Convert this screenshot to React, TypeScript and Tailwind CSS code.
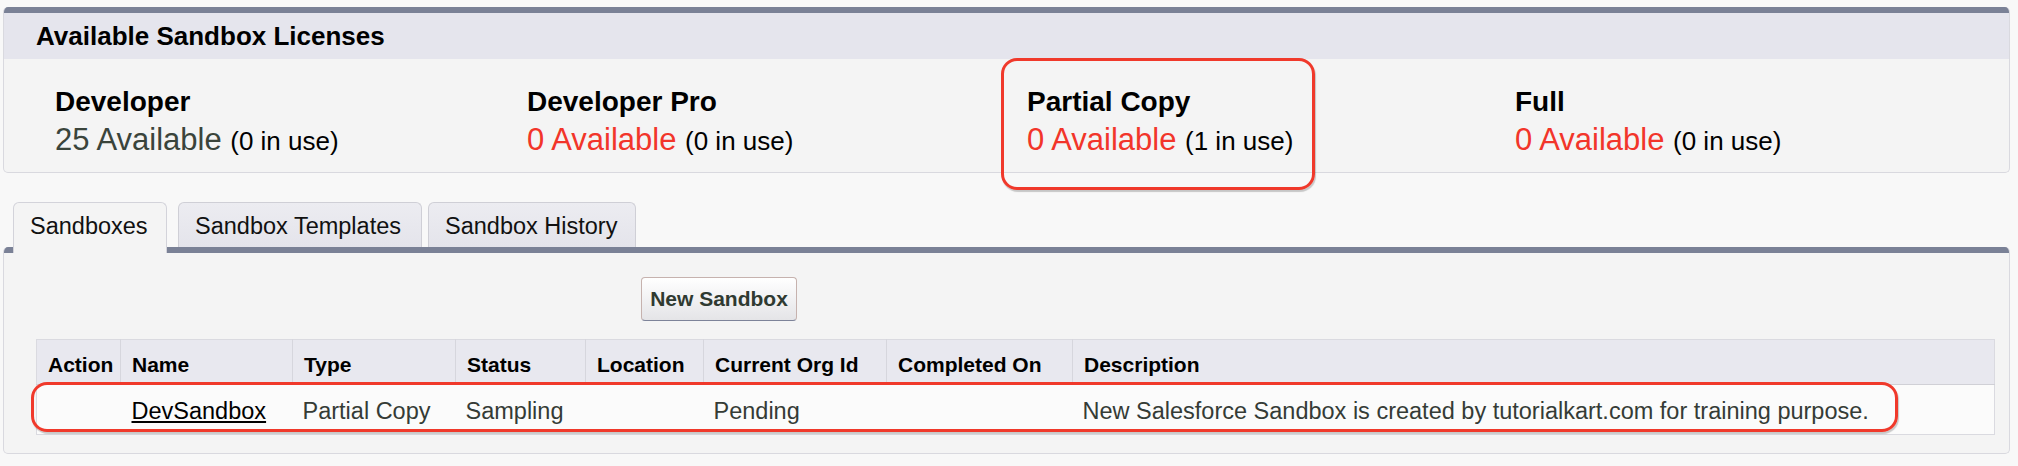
import React from "react";

const licenses = [
  { name: "Developer", avail: "25 Available", use: "(0 in use)", ok: true },
  { name: "Developer Pro", avail: "0 Available", use: "(0 in use)", ok: false },
  { name: "Partial Copy", avail: "0 Available", use: "(1 in use)", ok: false },
  { name: "Full", avail: "0 Available", use: "(0 in use)", ok: false },
];

const cols = [
  { label: "Action", w: 84 },
  { label: "Name", w: 172 },
  { label: "Type", w: 163 },
  { label: "Status", w: 130 },
  { label: "Location", w: 118 },
  { label: "Current Org Id", w: 183 },
  { label: "Completed On", w: 186 },
  { label: "Description", w: 922 },
];

export default function App() {
  return (
    <div className="relative w-[2018px] h-[466px] overflow-hidden bg-[#f8f8f8] pt-[7px] font-['Liberation_Sans',Arial,sans-serif] text-black">
      {/* Available Sandbox Licenses panel */}
      <div className="ml-[3px] w-[2007px] overflow-hidden rounded-[5px] border border-t-0 border-[#d9d9df] bg-[#f4f4f4]">
        <div className="h-[6px] bg-[#7a8196]" />
        <div className="h-[46px] bg-[#e5e5ed] pl-[32px] text-[26px] font-bold leading-[46px]">
          Available Sandbox Licenses
        </div>
        <div className="grid grid-cols-[472px_500px_488px_1fr] pl-[51px] pt-[27px] pb-[14px]">
          {licenses.map((l) => (
            <div key={l.name}>
              <div className="text-[28px] font-bold leading-[32px]">{l.name}</div>
              <div className="mt-[4px] text-[31px] leading-[36px] whitespace-nowrap">
                <span className={l.ok ? "text-[#3a443b]" : "text-[#f2352a]"}>{l.avail}</span>{" "}
                <span className="text-[26px] leading-[20px] text-black">{l.use}</span>
              </div>
            </div>
          ))}
        </div>
      </div>

      {/* Tabs */}
      <div className="mt-[29px] flex h-[45px] items-start">
        <div className="relative z-10 ml-[13px] -mb-[6px] h-[51px] w-[154px] rounded-t-[6px] border border-b-0 border-[#d3d3da] bg-[#f4f4f4] pl-[16px] pt-[9px] text-[23.5px] leading-[28px] text-[#111]">
          Sandboxes
        </div>
        <div className="ml-[11px] h-[45px] w-[244px] rounded-t-[6px] border border-b-0 border-[#cfcfd6] bg-[linear-gradient(#ececf1,#e4e4eb)] pl-[16px] pt-[9px] text-[23.5px] leading-[28px] text-[#111]">
          Sandbox Templates
        </div>
        <div className="ml-[6px] h-[45px] w-[208px] rounded-t-[6px] border border-b-0 border-[#cfcfd6] bg-[linear-gradient(#ececf1,#e4e4eb)] pl-[16px] pt-[9px] text-[23.5px] leading-[28px] text-[#111]">
          Sandbox History
        </div>
      </div>

      {/* Sandboxes content panel */}
      <div className="ml-[3px] w-[2007px] overflow-hidden rounded-[5px] border border-t-0 border-[#d9d9df] bg-[#f4f4f4]">
        <div className="h-[6px] bg-[#7a8196]" />
        <div className="pl-[32px] pr-[15px] pt-[24px] pb-[18px]">
          <div className="flex">
            <button className="ml-[605px] h-[44px] w-[156px] rounded-[4px] border border-[#c6b2ae] border-b-[#7d8399] bg-[linear-gradient(#ffffff,#e4e4e7)] text-[21px] font-bold leading-[24px] text-[#2f3a31]">
              New Sandbox
            </button>
          </div>
          <table className="mt-[18px] w-[1958px] table-fixed border-collapse border border-[#dadae0]">
            <colgroup>
              {cols.map((c) => (
                <col key={c.label} style={{ width: c.w }} />
              ))}
            </colgroup>
            <thead>
              <tr className="bg-[#e8e8ef]">
                {cols.map((c, i) => (
                  <th
                    key={c.label}
                    className={
                      "px-[11px] pt-[13px] pb-[7px] text-left text-[21px] font-bold leading-[24px] whitespace-nowrap text-black " +
                      (i > 0 ? "border-l border-[#d6d6dd]" : "")
                    }
                  >
                    {c.label}
                  </th>
                ))}
              </tr>
            </thead>
            <tbody>
              <tr className="border-t border-[#d0d0d6] bg-[#fbfbfb] text-[23.5px] leading-[26px] text-[#353b36]">
                <td className="px-[11px] pt-[13px] pb-[10px]"></td>
                <td className="px-[11px] pt-[13px] pb-[10px]">
                  <a className="text-black underline">DevSandbox</a>
                </td>
                <td className="px-[10px] pt-[13px] pb-[10px] whitespace-nowrap">Partial Copy</td>
                <td className="px-[10px] pt-[13px] pb-[10px]">Sampling</td>
                <td className="px-[10px] pt-[13px] pb-[10px]"></td>
                <td className="px-[10px] pt-[13px] pb-[10px]">Pending</td>
                <td className="px-[10px] pt-[13px] pb-[10px]"></td>
                <td className="px-[10px] pt-[13px] pb-[10px] whitespace-nowrap">
                  New Salesforce Sandbox is created by tutorialkart.com for training purpose.
                </td>
              </tr>
            </tbody>
          </table>
        </div>
      </div>

      {/* Red annotation outlines */}
      <div className="pointer-events-none absolute left-[1001px] top-[58px] h-[132px] w-[314px] rounded-[16px] border-[3px] border-[#f0392b] shadow-[1px_2px_1px_rgba(0,0,0,0.2)]" />
      <div className="pointer-events-none absolute left-[31px] top-[382px] h-[50px] w-[1867px] rounded-[16px] border-[3px] border-[#f0392b] shadow-[1px_2px_1px_rgba(0,0,0,0.2)]" />
    </div>
  );
}
